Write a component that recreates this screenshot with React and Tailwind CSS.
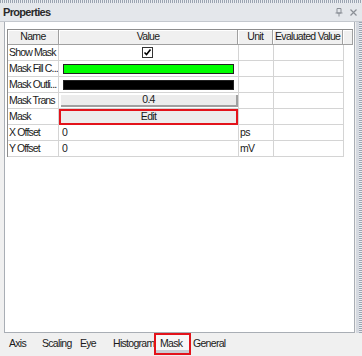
import React from "react";

const rows = [
  { name: "Show Mask", kind: "check" },
  { name: "Mask Fill C...", kind: "color", color: "bg-[#00ff00]" },
  { name: "Mask Outli...", kind: "color", color: "bg-black" },
  { name: "Mask Trans", kind: "button", text: "0.4" },
  { name: "Mask", kind: "edit", text: "Edit" },
  { name: "X Offset", kind: "text", text: "0", unit: "ps" },
  { name: "Y Offset", kind: "text", text: "0", unit: "mV" },
];

function ValueCell({ row }) {
  if (row.kind === "check") {
    return (
      <div className="flex h-full items-center pl-[83px]">
        <div className="flex h-[11px] w-[11px] items-center justify-center border border-[#333] bg-white">
          <svg width="9" height="9" viewBox="0 0 9 9">
            <path d="M1.5 4.5 L3.5 6.5 L7.5 1.5" fill="none" stroke="#000" strokeWidth="1.6" />
          </svg>
        </div>
      </div>
    );
  }
  if (row.kind === "color") {
    return (
      <div className="flex h-full items-center pl-[4px]">
        <div className={`h-[10px] w-[171px] border border-[#222] ${row.color}`}></div>
      </div>
    );
  }
  if (row.kind === "button") {
    return (
      <div className="flex h-full items-center pl-[2px]">
        <div className="flex h-[12px] w-[177px] items-center justify-center border-b-2 border-r-2 border-[#a0a0a0] bg-[#ececec] leading-none">
          {row.text}
        </div>
      </div>
    );
  }
  if (row.kind === "edit") {
    return (
      <div className="flex h-full items-center">
        <div className="flex h-[16px] w-[181px] items-center justify-center border-[2.5px] border-[#e3131b] bg-[#ececec] leading-none">
          {row.text}
        </div>
      </div>
    );
  }
  return <div className="flex h-full items-center pl-[3px]">{row.text}</div>;
}

export default function App() {
  return (
    <div
      className="flex h-[356px] w-[362px] flex-col overflow-hidden bg-[#f0f0f0] text-[10.5px] tracking-[-0.7px] text-[#1a1a1a]"
      style={{ fontFamily: "'Liberation Sans', Arial, sans-serif" }}
    >
      <div className="h-[3px] w-full bg-[repeating-linear-gradient(90deg,#9aa3b0_0_1px,#e9ecf0_1px_2px)]"></div>
      <div className="flex h-[19px] items-center justify-between border-b border-[#c4c8ce] bg-[#e4e7eb] pl-[3px] pr-[5px]">
        <span className="text-[11px] font-bold tracking-[-0.7px] text-[#2a2a2a]">Properties</span>
        <div className="flex items-center gap-[7px] text-[#8a8f96]">
          <svg width="8" height="9" viewBox="0 0 8 9">
            <path d="M2 0.5 H6 V5 H2 Z M0.5 5 H7.5 M4 5 V8.5" fill="none" stroke="#8a8f96" strokeWidth="1" />
          </svg>
          <svg width="7" height="7" viewBox="0 0 7 7">
            <path d="M0.5 0.5 L6.5 6.5 M6.5 0.5 L0.5 6.5" stroke="#8a8f96" strokeWidth="1.2" />
          </svg>
        </div>
      </div>
      <div className="flex h-[311px]">
        <div className="ml-[4px] h-full w-[351px] border-b border-l border-r border-[#a9aeb5] bg-white pl-[2px] pt-[7px]">
          <div className="w-[346px]">
            <div className="flex h-[16px] border-l border-t border-[#8d8d8d] bg-[#f0f0f0]">
              {[
                ["Name", "w-[51px]"],
                ["Value", "w-[180px]"],
                ["Unit", "w-[35px]"],
                ["Evaluated Value", "w-[70px]"],
                ["", "w-[10px]"],
              ].map(([label, w], i) => (
                <div
                  key={i}
                  className={`${w} flex items-center justify-center overflow-hidden whitespace-nowrap border-b border-r border-[#a0a0a0] shadow-[inset_1px_1px_0_#ffffff]`}
                >
                  {label}
                </div>
              ))}
            </div>
            <div className="w-[337px] border-l border-[#8d8d8d]">
              {rows.map((row) => (
                <div key={row.name} className="flex h-[16px] border-b border-[#d4d4d4]">
                  <div className="flex w-[51px] items-center overflow-hidden whitespace-nowrap border-r border-[#d4d4d4] pl-[1px] tracking-[-0.85px]">
                    {row.name}
                  </div>
                  <div className="w-[180px] border-r border-[#d4d4d4]">
                    <ValueCell row={row} />
                  </div>
                  <div className="flex w-[35px] items-center border-r border-[#d4d4d4] pl-[1px]">
                    {row.unit || ""}
                  </div>
                  <div className="w-[70px] border-r border-[#d4d4d4]"></div>
                </div>
              ))}
            </div>
          </div>
        </div>
        <div className="ml-[1px] h-full w-[3px] bg-[#d5d9e0]"></div>
        <div className="h-full w-[3px] bg-[repeating-linear-gradient(180deg,#9aa3b0_0_1px,#e9ecf0_1px_2px)]"></div>
      </div>
      <div className="flex h-[22px] items-center pl-[9px]">
        <span className="w-[33px]">Axis</span>
        <span className="w-[38px]">Scaling</span>
        <span className="w-[33px]">Eye</span>
        <span className="w-[41px]">Histogram</span>
        <span className="flex h-[22px] w-[37px] items-center border-2 border-[#e3131b] bg-[#f7f7f7] pl-[4px] shadow-[inset_0_-3px_0_#c9cdd3]">
          Mask
        </span>
        <span className="pl-[2px]">General</span>
      </div>
      <div className="flex-1"></div>
    </div>
  );
}
